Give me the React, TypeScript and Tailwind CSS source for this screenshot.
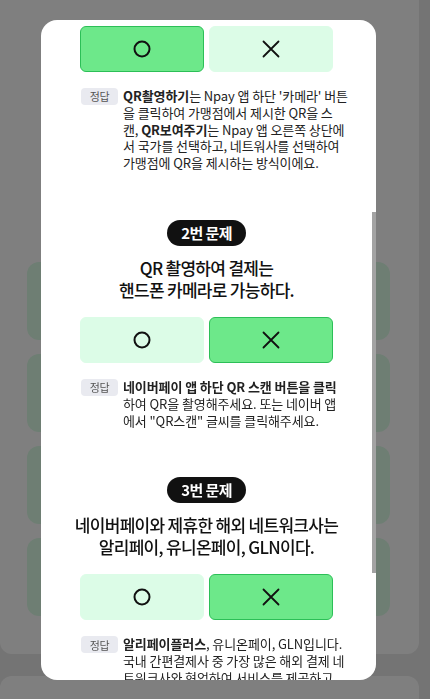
import type { ReactNode } from 'react';

type Quiz = {
  no?: number;
  question?: string[];
  pick: 'O' | 'X';
  answer: ReactNode[];
};

const QUIZZES: Quiz[] = [
  {
    pick: 'O',
    answer: [
      <>
        <b className="font-bold">QR촬영하기</b>는 Npay 앱 하단 &apos;카메라&apos; 버튼
      </>,
      '을 클릭하여 가맹점에서 제시한 QR을 스',
      <>
        캔, <b className="font-bold">QR보여주기</b>는 Npay 앱 오른쪽 상단에
      </>,
      '서 국가를 선택하고, 네트워사를 선택하여',
      '가맹점에 QR을 제시하는 방식이에요.',
    ],
  },
  {
    no: 2,
    question: ['QR 촬영하여 결제는', '핸드폰 카메라로 가능하다.'],
    pick: 'X',
    answer: [
      <b className="font-bold">네이버페이 앱 하단 QR 스캔 버튼을 클릭</b>,
      '하여 QR을 촬영해주세요. 또는 네이버 앱',
      '에서 "QR스캔" 글씨를 클릭해주세요.',
    ],
  },
  {
    no: 3,
    question: ['네이버페이와 제휴한 해외 네트워크사는', '알리페이, 유니온페이, GLN이다.'],
    pick: 'X',
    answer: [
      <>
        <b className="font-bold">알리페이플러스</b>, 유니온페이, GLN입니다.
      </>,
      '국내 간편결제사 중 가장 많은 해외 결제 네',
      '트워크사와 협업하여 서비스를 제공하고',
      '있어요.',
    ],
  },
];

function CircleIcon() {
  return (
    <svg width="20" height="20" viewBox="0 0 20 20" fill="none">
      <circle cx="10" cy="10" r="7.5" stroke="#111" strokeWidth="2" />
    </svg>
  );
}

function CrossIcon() {
  return (
    <svg width="20" height="20" viewBox="0 0 20 20" fill="none">
      <path d="M2.5 2.5L17.5 17.5M17.5 2.5L2.5 17.5" stroke="#111" strokeWidth="1.8" strokeLinecap="round" />
    </svg>
  );
}

function OXButtons({ pick }: { pick: 'O' | 'X' }) {
  const on = 'bg-[#6de88a] border-[#2cbf57]';
  const off = 'bg-[#dcfce7] border-[#dcfce7]';
  return (
    <div className="flex gap-[5px]">
      <div className={`flex h-[46px] w-[124px] items-center justify-center rounded-[6px] border ${pick === 'O' ? on : off}`}>
        <CircleIcon />
      </div>
      <div className={`flex h-[46px] w-[124px] items-center justify-center rounded-[6px] border ${pick === 'X' ? on : off}`}>
        <CrossIcon />
      </div>
    </div>
  );
}

function QuizBlock({ quiz }: { quiz: Quiz }) {
  return (
    <div className="flex flex-col items-center pb-[48px]">
      {quiz.no && (
        <>
          <div className="flex h-[26px] items-center rounded-full bg-[#111] px-[14px] text-[15px] font-bold tracking-[-0.6px] text-white">
            {quiz.no}번 문제
          </div>
          <div className="mt-[11px] mb-[16px] text-center text-[17px] font-medium leading-[22px] tracking-[-0.7px] text-[#111]">
            {quiz.question?.map((line) => (
              <div key={line} className="whitespace-nowrap">
                {line}
              </div>
            ))}
          </div>
        </>
      )}
      <OXButtons pick={quiz.pick} />
      <div className="mt-4 flex w-[253px] gap-[5px] pl-[1px]">
        <div className="flex h-[17px] w-[37px] shrink-0 items-center justify-center rounded-[4px] bg-[#e9eaf0] text-[11px] tracking-[-0.3px] text-[#555]">
          정답
        </div>
        <div className="text-[13px] leading-[16.8px] tracking-[-0.1px] text-[#222]">
          {quiz.answer.map((line, i) => (
            <div key={i} className="whitespace-nowrap">
              {line}
            </div>
          ))}
        </div>
      </div>
    </div>
  );
}

export default function App() {
  return (
    <div className="relative h-[699px] overflow-hidden bg-[#e9e9e9] font-['Noto_Sans_CJK_KR','Noto_Sans',sans-serif]">
      {/* Page behind the dialog */}
      <div className="flex w-[419px] flex-col gap-[14px] rounded-b-xl bg-white pt-[262px] pr-[29px] pb-[38px] pl-[27px]">
        {[0, 1, 2, 3].map((i) => (
          <div key={i} className="h-[78px] rounded-xl bg-[#dcfce7]" />
        ))}
      </div>
      <div className="mt-[22px] h-[120px] w-[419px] rounded-t-xl bg-white" />

      {/* Dim */}
      <div className="fixed inset-0 bg-black/50" />

      {/* Dialog */}
      <div className="fixed top-[20px] left-[41px] h-[660px] w-[335px] overflow-hidden rounded-2xl bg-white">
        <div className="flex flex-col items-center pt-[6px] pr-[4px]">
          {QUIZZES.map((q, i) => (
            <QuizBlock key={i} quiz={q} />
          ))}
        </div>
        <div className="absolute top-[192px] right-0 h-[361px] w-[4px] bg-[#a3a3a3]" />
      </div>
    </div>
  );
}
